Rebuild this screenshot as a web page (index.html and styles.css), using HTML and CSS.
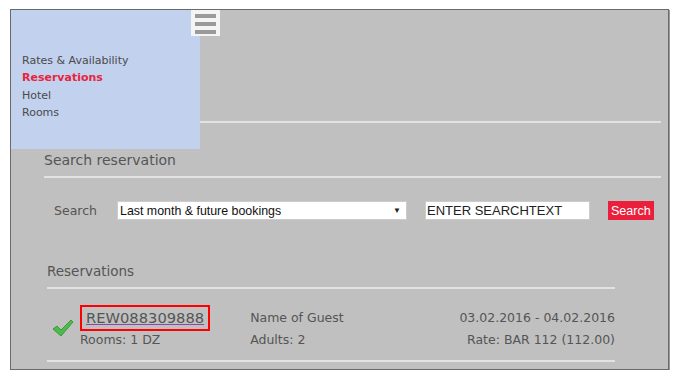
FILE: index.html
```html
<!DOCTYPE html>
<html lang="en">

<head>
    <meta charset="UTF-8">
    <meta name="viewport" content="width=device-width, initial-scale=1.0">
    <title>Reservations</title>
    <link rel="stylesheet" href="styles.css">
</head>

<body>
    <div class="frame">
        <div class="top-bar"></div>

        <div class="menu">
            <a href="#">Rates &amp; Availability</a>
            <a href="#" class="active">Reservations</a>
            <a href="#">Hotel</a>
            <a href="#">Rooms</a>
        </div>
        <div class="burger">
            <span></span>
            <span></span>
            <span></span>
        </div>

        <div class="section search-section">
            <h2>Search reservation</h2>
            <div class="search-row">
                <label for="range">Search</label>
                <div class="select">
                    <span>Last month &amp; future bookings</span>
                    <span class="arrow">&#9660;</span>
                </div>
                <input type="text" id="searchtext" value="ENTER SEARCHTEXT">
                <button type="button">Search</button>
            </div>
        </div>

        <div class="section res-section">
            <h2>Reservations</h2>
            <div class="res-row">
                <svg class="check" width="22" height="18" viewBox="0 0 22 18">
                    <path d="M1 10 L5 7 L9 11 L19 1 L21 3 L9 17 Z" fill="#4cbb4c" stroke="#3a9a3a" stroke-width="1" stroke-linejoin="round"/>
                </svg>
                <div class="col col-id">
                    <a href="#" class="res-id">REW088309888</a>
                    <span>Rooms: 1 DZ</span>
                </div>
                <div class="col col-guest">
                    <span class="first">Name of Guest</span>
                    <span>Adults: 2</span>
                </div>
                <div class="col col-date">
                    <span class="first">03.02.2016 - 04.02.2016</span>
                    <span>Rate: BAR 112 (112.00)</span>
                </div>
            </div>
        </div>
    </div>
</body>

</html>
```

FILE: styles.css
```css
body {
    margin: 0;
    background: #fff;
    font-family: 'DejaVu Sans', Verdana, sans-serif;
}

.frame {
    position: relative;
    margin: 9px 0 0 10px;
    width: 657px;
    height: 359px;
    background: #c0c0c0;
    border: 1px solid #6a6a6a;
    box-shadow: 1px 1px 0 #9a9a9a;
    overflow: hidden;
}

.top-bar {
    height: 111px;
    margin-right: 7px;
    border-bottom: 2px solid #e2e2e2;
}

.menu {
    position: absolute;
    top: 0;
    left: 0;
    width: 189px;
    height: 139px;
    background: #c2d1ee;
    box-sizing: border-box;
    padding: 42px 0 0 11px;
}

.menu a {
    display: block;
    font-size: 11px;
    line-height: 17.4px;
    color: #4a4a4a;
    text-decoration: none;
}

.menu a.active {
    color: #e8253d;
    font-weight: bold;
}

.burger {
    position: absolute;
    top: 0;
    left: 180px;
    width: 29px;
    height: 26px;
    background: #f4f4f4;
    box-sizing: border-box;
    padding: 4px 4px 0 4px;
}

.burger span {
    display: block;
    height: 4px;
    background: #9a9a9a;
    margin-bottom: 4px;
}

.section h2 {
    margin: 0;
    font-weight: normal;
    color: #555;
}

.search-section {
    margin: 28px 7px 0 33px;
}

.search-section h2 {
    font-size: 14px;
    line-height: 18px;
    padding-bottom: 7px;
    border-bottom: 2px solid #e2e2e2;
}

.search-row {
    display: flex;
    align-items: center;
    margin-top: 23px;
    padding-left: 10px;
}

.search-row label {
    font-size: 12.5px;
    color: #555;
    width: 63px;
}

.select {
    display: flex;
    justify-content: space-between;
    align-items: center;
    width: 290px;
    height: 19px;
    box-sizing: border-box;
    background: #fff;
    border: 1px solid #ccc;
    padding: 0 5px 0 2px;
    font-family: 'Liberation Sans', Arial, sans-serif;
    font-size: 12.4px;
    color: #111;
}

.select .arrow {
    font-size: 8px;
    color: #222;
}

.search-row input {
    margin-left: 18px;
    width: 165px;
    height: 19px;
    box-sizing: border-box;
    border: 1px solid #ccc;
    padding: 0 1px;
    font-family: 'Liberation Sans', Arial, sans-serif;
    font-size: 13px;
    color: #222;
}

.search-row button {
    margin-left: 18px;
    height: 19px;
    padding: 0 3px;
    border: none;
    background: #ea1f3c;
    color: #fff;
    font-family: 'Liberation Sans', Arial, sans-serif;
    font-size: 12.5px;
}

.res-section {
    margin: 42px 53px 0 36px;
}

.res-section h2 {
    font-size: 13.5px;
    line-height: 18px;
    padding-bottom: 7px;
    border-bottom: 2px solid #e2e2e2;
}

.res-row {
    display: flex;
    align-items: flex-start;
    padding: 16px 0 11px 5px;
    border-bottom: 2px solid #e2e2e2;
    font-size: 12.5px;
    color: #555;
}

.check {
    margin-top: 14px;
    margin-right: 6px;
}

.col {
    display: flex;
    flex-direction: column;
}

.col span {
    line-height: 18px;
}

.col span.first {
    line-height: 26px;
}

.res-id {
    display: inline-block;
    border: 2px solid #f00;
    padding: 0 4px;
    color: #555;
    font-size: 14.7px;
    line-height: 22px;
    text-decoration-color: #8e44ad;
}

.col-guest {
    margin-left: 40px;
}

.col-date {
    margin-left: auto;
    align-items: flex-end;
}
```
